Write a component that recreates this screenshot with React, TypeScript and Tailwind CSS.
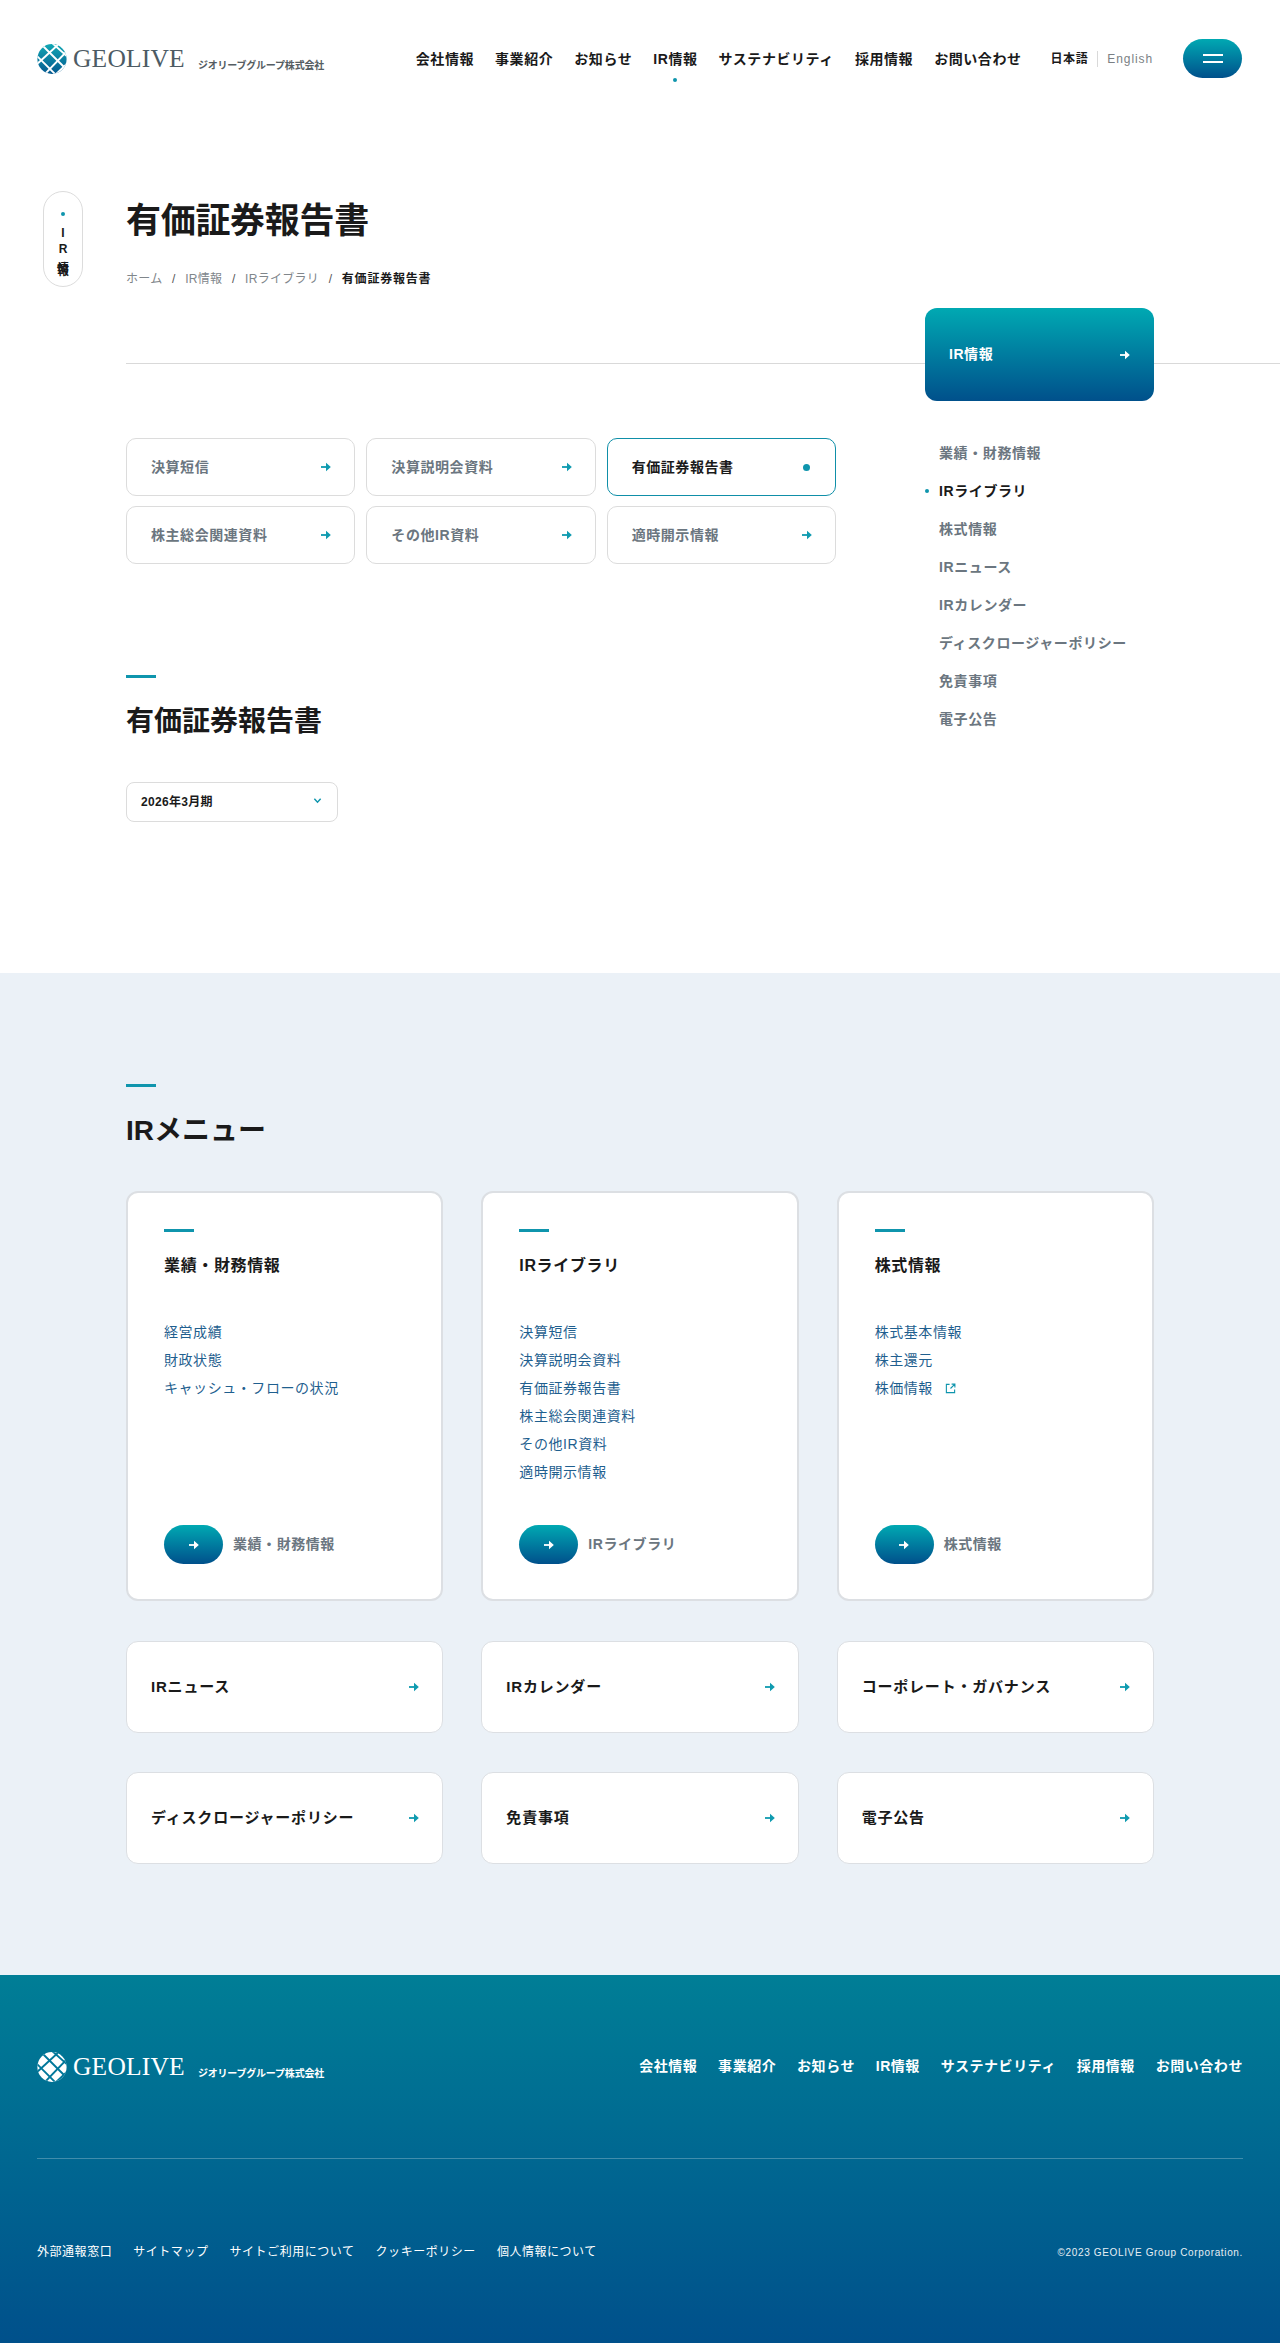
import React from "react";

const navItems = ["会社情報", "事業紹介", "お知らせ", "IR情報", "サステナビリティ", "採用情報", "お問い合わせ"];
const tabs = ["決算短信", "決算説明会資料", "有価証券報告書", "株主総会関連資料", "その他IR資料", "適時開示情報"];
const sideItems = ["業績・財務情報", "IRライブラリ", "株式情報", "IRニュース", "IRカレンダー", "ディスクロージャーポリシー", "免責事項", "電子公告"];
const footerLinks = ["外部通報窓口", "サイトマップ", "サイトご利用について", "クッキーポリシー", "個人情報について"];
const smallCards = ["IRニュース", "IRカレンダー", "コーポレート・ガバナンス", "ディスクロージャーポリシー", "免責事項", "電子公告"];

const menuCards = [
  { title: "業績・財務情報", links: ["経営成績", "財政状態", "キャッシュ・フローの状況"] },
  { title: "IRライブラリ", links: ["決算短信", "決算説明会資料", "有価証券報告書", "株主総会関連資料", "その他IR資料", "適時開示情報"] },
  { title: "株式情報", links: ["株式基本情報", "株主還元", "株価情報"] },
];

function Arrow({ className = "text-[#0f9bb0]" }: { className?: string }) {
  return (
    <svg viewBox="0 0 10 10" className={`w-[10px] h-[10px] ${className}`} fill="currentColor">
      <rect x="0" y="4.1" width="6" height="1.8" />
      <path d="M5 .8 9.8 5 5 9.2z" />
    </svg>
  );
}

function Logo({ white = false }: { white?: boolean }) {
  const id = white ? "logoW" : "logoC";
  const line = white ? "#00779a" : "#ffffff";
  return (
    <div className="flex items-end">
      <svg viewBox="0 0 30 30" className="w-[30px] h-[30px] shrink-0">
        <defs>
          <linearGradient id={id} x1="0" y1="0" x2="0" y2="1">
            <stop offset="0" stopColor={white ? "#fff" : "#12a8b4"} />
            <stop offset="1" stopColor={white ? "#fff" : "#04588f"} />
          </linearGradient>
          <clipPath id={`${id}c`}>
            <ellipse cx="15" cy="15" rx="14.6" ry="15" />
          </clipPath>
        </defs>
        <g clipPath={`url(#${id}c)`}>
          <rect width="30" height="30" fill={`url(#${id})`} />
          <g stroke={line} strokeWidth="1.9" fill="none">
            <path d="M-2 10 20 32" />
            <path d="M4 0 27 23" />
            <path d="M14 -2 32 14" />
            <path d="M-2 22 24 -2" />
            <path d="M6 32 32 5" />
            <path d="M17 32 32 18" />
          </g>
        </g>
      </svg>
      <span className={`ml-[6px] font-['Liberation_Serif',serif] text-[25.5px] leading-[30px] tracking-[0.2px] ${white ? "text-white" : "text-[#4d5b64]"}`}>
        GEOLIVE
      </span>
      <span className={`ml-[13px] mb-[1px] text-[10px] leading-[14px] font-bold tracking-[-0.2px] ${white ? "text-white" : "text-[#555d62]"}`}>
        ジオリーブグループ株式会社
      </span>
    </div>
  );
}

function SectionTitle({ children }: { children: React.ReactNode }) {
  return (
    <>
      <div className="w-[30px] h-[3px] bg-[#0f95ad]" />
      <h2 className="mt-[24px] text-[28px] leading-[40px] font-bold text-[#1a1a1a]">{children}</h2>
    </>
  );
}

export default function App() {
  return (
    <div className="w-[1280px] bg-white font-['Liberation_Sans','Noto_Sans_CJK_JP',sans-serif] text-[#1a1a1a]">
      <header className="h-[191px] pl-[37px] pr-[38px] pt-[39px] flex items-start justify-between">
        <div className="mt-[5px]">
          <Logo />
        </div>
        <div className="flex items-start">
          <nav className="flex gap-[21px] mt-[10px]">
            {navItems.map((n) => (
              <div key={n} className="relative text-[14px] leading-[20px] font-bold tracking-[0.56px] text-[#1a1a1a]">
                {n}
                {n === "IR情報" && (
                  <span className="absolute left-1/2 top-[29px] -ml-[2px] w-[4px] h-[4px] rounded-full bg-[#0f95ad]" />
                )}
              </div>
            ))}
          </nav>
          <div className="flex items-center ml-[29px] mt-[10px] h-[20px]">
            <span className="text-[12px] font-bold tracking-[0.6px]">日本語</span>
            <span className="w-px h-[16px] bg-[#d9d9d9] mx-[9px]" />
            <span className="text-[12px] tracking-[0.9px] text-[#7a7f84]">English</span>
          </div>
          <button className="ml-[30px] w-[59px] h-[39px] rounded-[20px] bg-gradient-to-b from-[#00a9b2] to-[#00508b] flex flex-col items-center justify-center gap-[5px]">
            <span className="w-[20px] h-[2px] bg-white" />
            <span className="w-[20px] h-[2px] bg-white" />
          </button>
        </div>
      </header>

      <div className="flex pl-[43px] items-start">
        <div className="w-[40px] h-[96px] rounded-[20px] border border-[#dcdcdc] flex flex-col items-center pt-[20px] overflow-hidden shrink-0">
          <span className="w-[4px] h-[4px] rounded-full bg-[#0f95ad]" />
          <span className="mt-[9px] text-[12px] leading-[16px] font-bold">I</span>
          <span className="text-[12px] leading-[16px] font-bold">R</span>
          <div className="grid mt-[5px] text-[12px] leading-[14px] font-bold">
            <span className="col-start-1 row-start-1">情</span>
            <span className="col-start-1 row-start-1 mt-[2px]">報</span>
          </div>
        </div>
        <div className="ml-[43px] grow h-[173px] border-b border-[#d9d9d9]">
          <h1 className="text-[35px] leading-[50px] mt-[5px] font-bold tracking-[-0.3px] text-[#1a1a1a]">有価証券報告書</h1>
          <div className="mt-[25px] flex items-center text-[12px] leading-[16px] text-[#80868b] tracking-[0.3px]">
            <span>ホーム</span>
            <span className="mx-[9.5px] text-[#555]">/</span>
            <span>IR情報</span>
            <span className="mx-[9.5px] text-[#555]">/</span>
            <span>IRライブラリ</span>
            <span className="mx-[9.5px] text-[#555]">/</span>
            <span className="font-bold text-[#1a1a1a] tracking-[0.8px]">有価証券報告書</span>
          </div>
        </div>
      </div>

      <main className="flex pl-[126px] h-[609px]">
        <div className="w-[710px] pt-[74px]">
          <div className="grid grid-cols-3 gap-x-[11px] gap-y-[10px]">
            {tabs.map((t) => {
              const on = t === "有価証券報告書";
              return (
                <div
                  key={t}
                  className={`h-[58px] rounded-[10px] border bg-white flex items-center justify-between pl-[24px] pr-[23px] text-[14px] font-bold tracking-[0.56px] ${
                    on ? "border-[#0f8fa8] text-[#1a1a1a]" : "border-[#dcdcdc] text-[#6b7680]"
                  }`}
                >
                  {t}
                  {on ? <span className="w-[7px] h-[7px] mr-[2px] rounded-full bg-[#0f95ad]" /> : <Arrow />}
                </div>
              );
            })}
          </div>
          <div className="mt-[111px]">
            <SectionTitle>有価証券報告書</SectionTitle>
          </div>
          <div className="mt-[40px] w-[212px] h-[40px] rounded-[8px] border border-[#dcdcdc] flex items-center justify-between pl-[14px] pr-[15px] text-[12px] font-bold tracking-[0.3px]">
            2026年3月期
            <svg viewBox="0 0 10 10" className="w-[9px] h-[9px] text-[#0f95ad] -mt-[3px]" fill="none" stroke="currentColor" strokeWidth="1.6">
              <path d="M1.5 3 5 6.8 8.5 3" />
            </svg>
          </div>
        </div>

        <aside className="relative w-[229px] ml-[89px] -mt-[56px] self-start">
          <div className="h-[93px] rounded-[12px] bg-gradient-to-b from-[#00a9b2] to-[#00508b] flex items-center justify-between pl-[24px] pr-[24px] text-white text-[14px] font-bold tracking-[0.56px]">
            IR情報
            <Arrow className="text-white" />
          </div>
          <ul className="mt-[33px] pl-[14px]">
            {sideItems.map((s) => (
              <li
                key={s}
                className={`relative h-[38px] text-[14px] leading-[38px] font-bold tracking-[0.6px] ${
                  s === "IRライブラリ" ? "text-[#1a1a1a]" : "text-[#6b7680]"
                }`}
              >
                {s === "IRライブラリ" && (
                  <span className="absolute -left-[14px] top-[17px] w-[4px] h-[4px] rounded-full bg-[#0f95ad]" />
                )}
                {s}
              </li>
            ))}
          </ul>
        </aside>
      </main>

      <section className="bg-[#ebf1f7] h-[1002px] pl-[126px] pr-[126px] pt-[111px]">
        <SectionTitle>IRメニュー</SectionTitle>
        <div className="mt-[40px] grid grid-cols-3 gap-x-[38px]">
          {menuCards.map((c) => (
            <div key={c.title} className="h-[410px] rounded-[12px] border-2 border-[#dcdfe3] bg-white px-[36px] pt-[36px] flex flex-col">
              <div className="w-[30px] h-[3px] bg-[#0f95ad]" />
              <h3 className="mt-[22px] text-[16px] leading-[24px] font-bold tracking-[0.64px] text-[#1a1a1a]">{c.title}</h3>
              <ul className="pt-[40px] grow">
                {c.links.map((l) => (
                  <li key={l} className="h-[28px] leading-[28px] text-[14px] tracking-[0.56px] text-[#1f5f8f] flex items-center">
                    {l}
                    {l === "株価情報" && (
                      <svg viewBox="0 0 12 12" className="ml-[12px] w-[11px] h-[11px] text-[#0f95ad]" fill="none" stroke="currentColor" strokeWidth="1.2">
                        <path d="M5 1.5H1.5v9h9V7" />
                        <path d="M6 6 10.5 1.5M7.2 1.2h3.6v3.6" />
                      </svg>
                    )}
                  </li>
                ))}
              </ul>
              <div className="mb-[35px] flex items-center">
                <span className="w-[59px] h-[39px] rounded-[20px] bg-gradient-to-b from-[#00a9b2] to-[#00508b] flex items-center justify-center">
                  <Arrow className="text-white" />
                </span>
                <span className="ml-[10px] text-[14px] font-bold tracking-[0.56px] text-[#6b7680]">{c.title}</span>
              </div>
            </div>
          ))}
        </div>
        <div className="mt-[40px] grid grid-cols-3 gap-x-[38px] gap-y-[39px]">
          {smallCards.map((s) => (
            <div key={s} className="h-[92px] rounded-[12px] border border-[#dcdfe3] bg-white flex items-center justify-between pl-[24px] pr-[23px] text-[15px] font-bold tracking-[0.8px] text-[#1a1a1a]">
              {s}
              <Arrow />
            </div>
          ))}
        </div>
      </section>

      <footer className="h-[368px] bg-gradient-to-b from-[#007e96] to-[#00508b] px-[37px] pt-[77px] text-white">
        <div className="flex items-start justify-between h-[106px] border-b border-[#ffffff40] box-content">
          <Logo white />
          <nav className="flex gap-[20.7px] mt-[4px]">
            {navItems.map((n) => (
              <span key={n} className="text-[14px] leading-[20px] font-bold tracking-[0.56px]">{n}</span>
            ))}
          </nav>
        </div>
        <div className="mt-[84px] flex items-center justify-between">
          <div className="flex gap-[21px] text-[12px] leading-[18px] tracking-[0.54px]">
            {footerLinks.map((f) => (
              <span key={f}>{f}</span>
            ))}
          </div>
          <span className="text-[10px] tracking-[0.65px] text-[#e6eef3]">©2023 GEOLIVE Group Corporation.</span>
        </div>
      </footer>
    </div>
  );
}
